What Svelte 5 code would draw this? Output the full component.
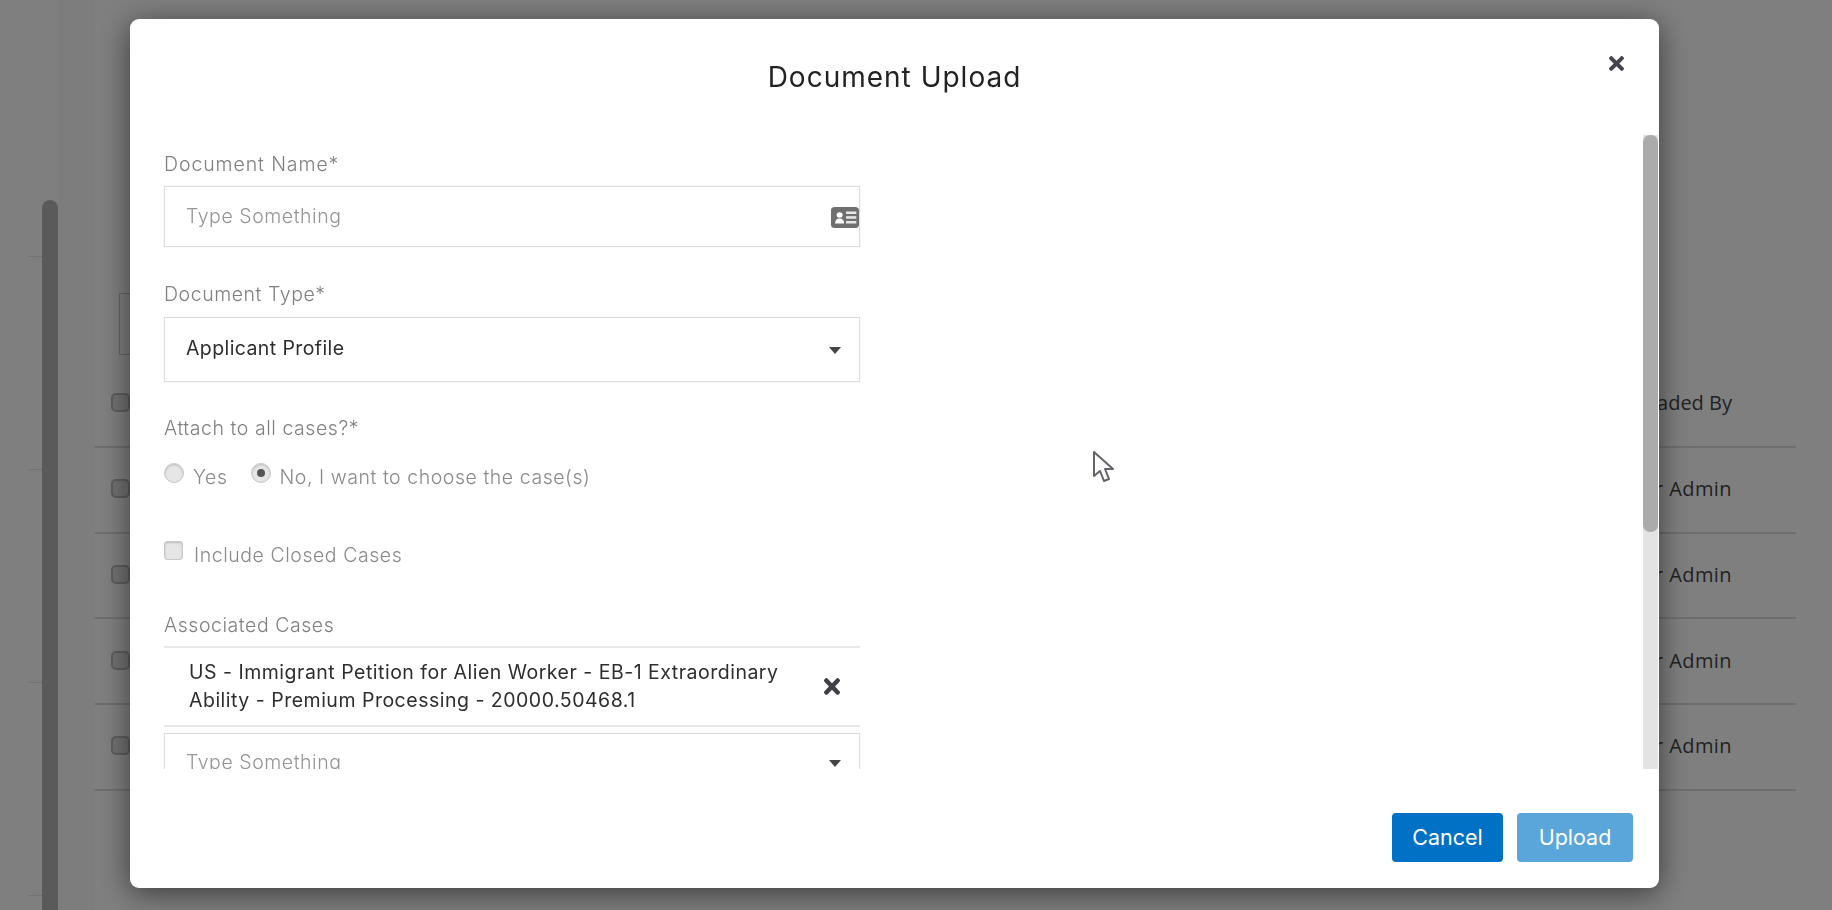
<script>
  const rows = ['User Admin', 'User Admin', 'User Admin', 'User Admin'];
  const sideLines = [0, 1, 2, 3];
  const timesPath = 'M242.72 256l100.07-100.07c12.28-12.28 12.28-32.19 0-44.48l-22.24-22.24c-12.28-12.28-32.19-12.28-44.48 0L176 189.28 75.93 89.21c-12.28-12.28-32.19-12.28-44.48 0L9.21 111.45c-12.28 12.28-12.28 32.19 0 44.48L109.28 256 9.21 356.07c-12.28 12.28-12.28 32.19 0 44.48l22.24 22.24c12.28 12.28 32.2 12.28 44.48 0L176 322.72l100.07 100.07c12.28 12.28 32.2 12.28 44.48 0l22.24-22.24c12.28-12.28 12.28-32.19 0-44.48L242.72 256z';
</script>

<div class="page">
  <div class="side">
    {#each sideLines as l}
      <div class="side-line"></div>
    {/each}
  </div>
  <div class="side-scroll"><div class="side-thumb"></div></div>
  <div class="rail"></div>
  <div class="main">
    <div class="toolbar"></div>
    <div class="table-head">
      <span class="check"></span>
      <span class="cell head-cell">Uploaded By</span>
    </div>
    {#each rows as name}
      <div class="table-row">
        <span class="check"></span>
        <span class="cell">{name}</span>
      </div>
    {/each}
  </div>
</div>

<div class="backdrop">
  <div class="modal">
    <div class="modal-head">
      <h2>Document Upload</h2>
      <button class="close" aria-label="Close">
        <svg viewBox="0 80 352 352" width="15" height="15"><path d={timesPath} /></svg>
      </button>
    </div>

    <div class="modal-body">
      <div class="form">
        <label class="label first" for="docname">Document Name*</label>
        <div class="box name">
          <span id="docname" class="placeholder">Type Something</span>
          <svg class="card" viewBox="0 0 26 21" width="28" height="21" preserveAspectRatio="none">
            <rect width="26" height="21" rx="3.5" fill="#6f6f6f" />
            <circle cx="8" cy="8" r="2.8" fill="#fff" />
            <path d="M3.8 16.5c0-3.4 1.5-5 4.2-5s4.2 1.6 4.2 5z" fill="#fff" />
            <rect x="14" y="4.5" width="9.5" height="2.5" fill="#e8e8e8" />
            <rect x="14" y="9.2" width="9.5" height="2.5" fill="#e8e8e8" />
            <rect x="14" y="14" width="9.5" height="2.5" fill="#e8e8e8" />
          </svg>
        </div>

        <div class="label type-label">Document Type*</div>
        <div class="box select">
          <span class="value">Applicant Profile</span>
          <span class="caret"></span>
        </div>

        <div class="label attach-label">Attach to all cases?*</div>
        <div class="radios">
          <span class="radio"></span>
          <span class="opt">Yes</span>
          <span class="radio on"><i></i></span>
          <span class="opt">No, I want to choose the case(s)</span>
        </div>

        <div class="closed">
          <span class="checkbox"></span>
          <span class="opt">Include Closed Cases</span>
        </div>

        <div class="label assoc-label">Associated Cases</div>
        <div class="case-item">
          <p>US - Immigrant Petition for Alien Worker - EB-1 Extraordinary Ability - Premium Processing - 20000.50468.1</p>
          <svg class="remove" viewBox="0 80 352 352" width="16" height="17" preserveAspectRatio="none"><path d={timesPath} /></svg>
        </div>
        <div class="box more">
          <span class="placeholder">Type Something</span>
          <span class="caret"></span>
        </div>
      </div>

      <div class="track"><div class="thumb"></div></div>
    </div>

    <div class="modal-foot">
      <button class="btn cancel">Cancel</button>
      <button class="btn upload">Upload</button>
    </div>
  </div>

  <svg class="cursor" viewBox="0 0 22 33" width="22" height="33">
    <path d="M2 2v24l6-5 4 10 5-2-4-10h8z" fill="#fff" stroke="#62626a" stroke-width="2" stroke-linejoin="round" />
  </svg>
</div>

<style>
  :global(body) {
    margin: 0;
    height: 910px;
    overflow: hidden;
    font-family: "Inter", "Open Sans", sans-serif;
  }

  .page {
    display: flex;
    height: 910px;
    background: #fff;
    color: #333;
  }

  .side {
    width: 42px;
    padding-top: 256px;
  }

  .side-line {
    height: 1px;
    margin-left: 28px;
    margin-bottom: 212px;
    background: #e6e6e6;
  }

  .side-scroll {
    width: 16px;
    padding-top: 200px;
  }

  .side-thumb {
    height: 710px;
    background: #b4b4b4;
    border-radius: 8px 8px 0 0;
  }

  .rail {
    width: 37px;
    background: #fafafa;
  }

  .main {
    flex: 1;
    padding: 293px 36px 0 0;
    font-family: "Open Sans", sans-serif;
    font-size: 20px;
  }

  .toolbar {
    width: 60px;
    height: 62px;
    margin-left: 24px;
    border: 1px solid #ccc;
    box-sizing: border-box;
  }

  .table-head {
    height: 93px;
    padding-top: 4px;
    display: flex;
    align-items: center;
    justify-content: space-between;
    border-bottom: 2px solid #ddd;
    box-sizing: border-box;
  }

  .table-row {
    height: 85.7px;
    padding-bottom: 2px;
    display: flex;
    align-items: center;
    justify-content: space-between;
    border-bottom: 2px solid #ddd;
    box-sizing: border-box;
  }

  .check {
    width: 19px;
    height: 19px;
    margin-left: 16px;
    background: #e2e2e2;
    border: 2px solid #bbb;
    border-radius: 5px;
    box-sizing: border-box;
  }

  .cell {
    width: 140px;
    margin-right: 64px;
    text-align: right;
    color: #444;
    letter-spacing: 0.4px;
  }

  .head-cell {
    letter-spacing: 0;
  }

  .backdrop {
    position: fixed;
    inset: 0;
    display: flex;
    padding: 19px 173px 22px 130px;
    background: rgba(0, 0, 0, 0.5);
  }

  .modal {
    flex: 1;
    display: flex;
    flex-direction: column;
    background: #fff;
    border-radius: 9px;
    box-shadow: 0 5px 30px rgba(0, 0, 0, 0.55);
    overflow: hidden;
  }

  .modal-head {
    position: relative;
    height: 116px;
    flex: none;
  }

  h2 {
    margin: 0;
    padding-top: 42px;
    text-align: center;
    font-size: 28px;
    line-height: 32px;
    font-weight: 400;
    letter-spacing: 1px;
    color: #222;
  }

  .close {
    position: absolute;
    top: 37px;
    right: 35px;
    padding: 0;
    border: 0;
    background: none;
    line-height: 0;
  }

  .close path {
    fill: #45454f;
  }

  .modal-body {
    display: flex;
    height: 634px;
    flex: none;
    justify-content: space-between;
    overflow: hidden;
  }

  .form {
    width: 696px;
    margin-left: 34px;
    font-size: 19.5px;
    font-weight: 300;
    letter-spacing: 0.55px;
  }

  .label {
    display: block;
    height: 24px;
    line-height: 24px;
    color: #808080;
  }

  .first {
    margin-top: 17px;
    margin-bottom: 10px;
    letter-spacing: 0.9px;
  }

  .type-label {
    margin-top: 35px;
    margin-bottom: 11px;
  }

  .attach-label {
    margin-top: 34px;
  }

  .assoc-label {
    margin-top: 45px;
  }

  .box {
    display: flex;
    align-items: center;
    justify-content: space-between;
    box-sizing: border-box;
    border: 1px solid #dcdcdc;
    box-shadow: 0 0 1px #d8d8d8;
    padding-left: 21px;
  }

  .name {
    height: 61px;
    padding-right: 0;
  }

  .select {
    height: 65px;
    padding-right: 18px;
  }

  .more {
    height: 58px;
    margin-top: 6px;
    padding-right: 18px;
  }

  .placeholder {
    color: #959595;
    margin-top: -1px;
  }

  .value {
    color: #2e2e2e;
    font-weight: 400;
    margin-top: -3px;
    letter-spacing: 0.4px;
  }

  .card {
    margin-top: 2px;
  }

  .caret {
    width: 0;
    height: 0;
    border-left: 6px solid transparent;
    border-right: 6px solid transparent;
    border-top: 7px solid #444;
    margin-top: 2px;
  }

  .radios {
    display: flex;
    align-items: flex-start;
    margin-top: 23px;
    height: 27px;
  }

  .radio {
    width: 20px;
    height: 20px;
    box-sizing: border-box;
    border: 1px solid #c8c8c8;
    border-radius: 50%;
    background: #e6e6e6;
    box-shadow: inset 0 1px 2px #bbb;
    display: flex;
    align-items: center;
    justify-content: center;
  }

  .radio i {
    width: 8px;
    height: 8px;
    border-radius: 50%;
    background: #555;
  }

  .radio.on {
    margin-left: 23px;
  }

  .opt {
    margin-left: 9px;
    margin-top: 2px;
    line-height: 24px;
    color: #8a8a8a;
  }

  .closed {
    display: flex;
    align-items: flex-start;
    margin-top: 51px;
    height: 27px;
  }

  .checkbox {
    width: 19px;
    height: 19px;
    box-sizing: border-box;
    border: 1px solid #c8c8c8;
    border-radius: 3px;
    background: #e6e6e6;
    box-shadow: inset 0 1px 2px #bbb;
  }

  .closed .opt {
    margin-left: 11px;
  }

  .case-item {
    display: flex;
    align-items: center;
    justify-content: space-between;
    margin-top: 9px;
    padding: 10px 20px 11px 25px;
    border-top: 2px solid #e8e8e8;
    border-bottom: 2px solid #e8e8e8;
  }

  .case-item p {
    margin: 0;
    width: 600px;
    line-height: 28px;
    color: #2e2e2e;
    font-weight: 400;
    letter-spacing: 0.5px;
  }

  .remove path {
    fill: #3f3f47;
  }

  .track {
    width: 15px;
    margin-right: 1px;
    background: #e3e3e3;
  }

  .thumb {
    height: 397px;
    background: #ababab;
    border-radius: 7px 7px 7px 7px;
  }

  .modal-foot {
    display: flex;
    justify-content: flex-end;
    gap: 14px;
    padding: 44px 26px 0 0;
  }

  .btn {
    height: 49px;
    padding-bottom: 3px;
    border: 0;
    border-radius: 4px;
    color: #fff;
    font-family: inherit;
    font-size: 21.5px;
  }

  .cancel {
    width: 111px;
    background: #0071c5;
  }

  .upload {
    width: 116px;
    background: #5aa5da;
  }

  .cursor {
    position: absolute;
    left: 1092px;
    top: 450px;
  }
</style>
